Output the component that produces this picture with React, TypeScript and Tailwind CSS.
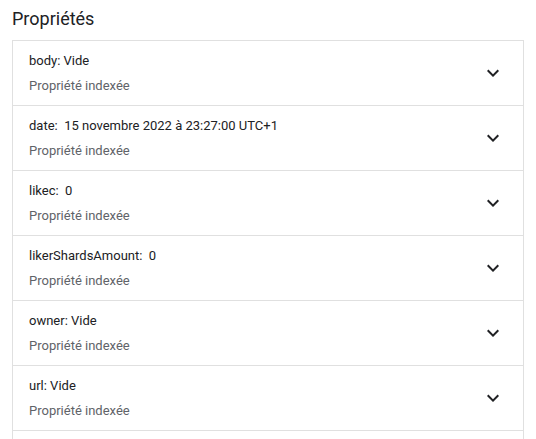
import React from "react";

const rows: { k: string; v: string }[] = [
  { k: "body:", v: " Vide" },
  { k: "date:", v: "  15 novembre 2022 à 23:27:00 UTC+1" },
  { k: "likec:", v: "  0" },
  { k: "likerShardsAmount:", v: "  0" },
  { k: "owner:", v: " Vide" },
  { k: "url:", v: " Vide" },
  { k: "", v: "" },
];

function Chevron() {
  return (
    <svg width="24" height="24" viewBox="0 0 24 24" className="text-[#202124]">
      <path d="M16.59 8.59 12 13.17 7.41 8.59 6 10l6 6 6-6z" fill="currentColor" />
    </svg>
  );
}

export default function App() {
  return (
    <div className="w-[536px] h-[439px] overflow-hidden bg-white font-['Roboto',sans-serif] text-[#202124]">
      <div className="px-3 pt-[7px] pb-[9px] text-[18px] leading-6">Propriétés</div>
      <div className="mx-3 w-[512px] border border-[#e0e0e0] border-b-0">
        {rows.map((r, i) => (
          <div key={i} className="h-[65px] border-b border-[#e0e0e0] flex items-center pl-4 pr-[18px]">
            <div className="flex-1 flex flex-col pt-[1px]">
              {r.k && (
                <>
                  <div className="text-[13px] leading-5 whitespace-pre">
                    {r.k}
                    {r.v}
                  </div>
                  <div className="text-[13px] leading-5 mt-[5px] text-[#5f6368]">Propriété indexée</div>
                </>
              )}
            </div>
            {r.k && <Chevron />}
          </div>
        ))}
      </div>
    </div>
  );
}
